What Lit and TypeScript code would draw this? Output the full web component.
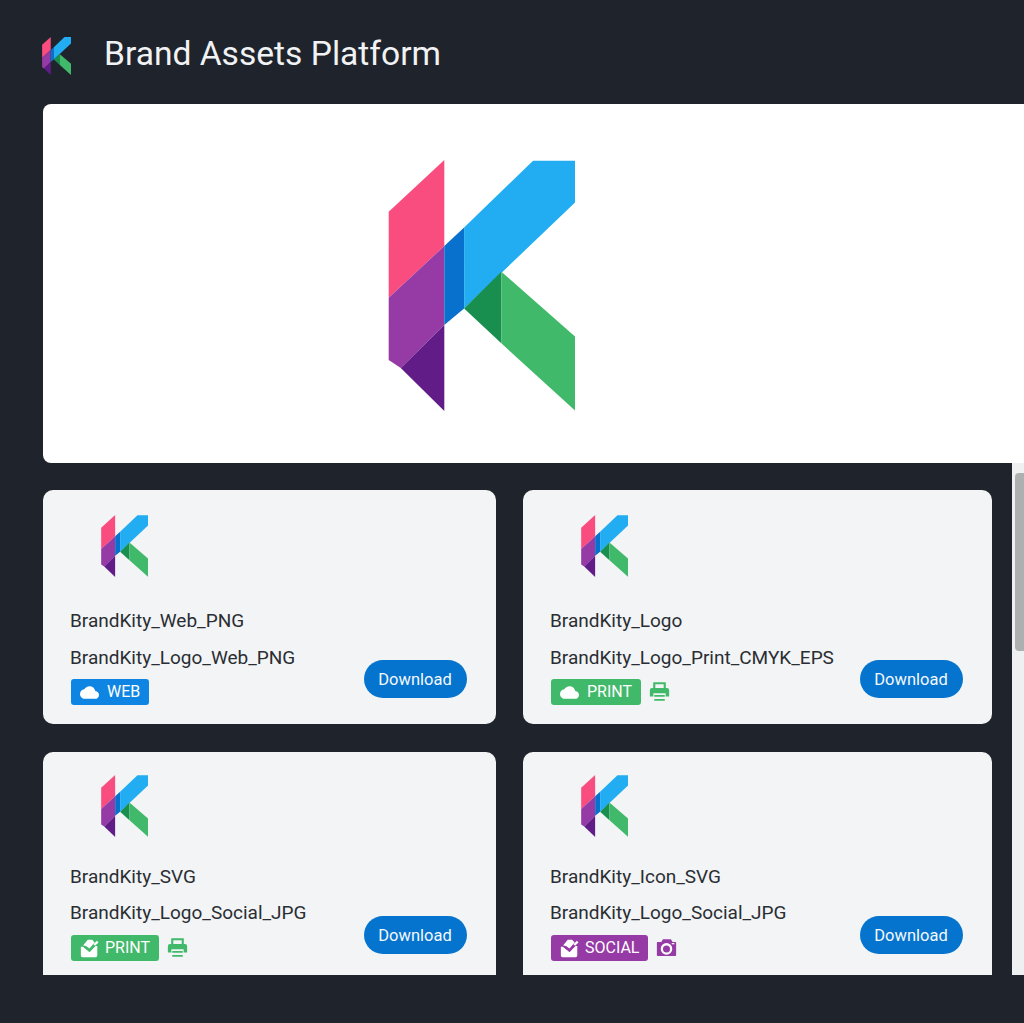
import { LitElement, html, css, svg } from "lit";
import { customElement } from "lit/decorators.js";

const logo = (cls: string) => html`<svg class=${cls} viewBox="0 0 186 251" preserveAspectRatio="none" aria-hidden="true">
  ${svg`
  <path fill="#f94d80" d="M0.7 51.7 56 0V86L0.7 137.7z"/>
  <path fill="#963aa5" d="M0.7 137.7 56 86V165L12.7 208 0.7 200z"/>
  <path fill="#611c87" d="M12.7 208 56 165V251z"/>
  <path fill="#0870cd" d="M56 86 75.7 67.5V148.5L56 165z"/>
  <path fill="#22adf2" d="M75.7 67.5 144.3 0.7H186.3V42.3L75.7 148.5z"/>
  <path fill="#188f4f" d="M75.7 148.5 112.7 111.7V183.3z"/>
  <path fill="#41b96a" d="M112.7 111.7 186.3 176.7V250.7L112.7 183.3z"/>
  `}
</svg>`;

const cloud = html`<svg class="glyph" viewBox="0 0 24 24" aria-hidden="true"><path fill="#fff" d="M19.35 10.04C18.67 6.59 15.64 4 12 4 9.11 4 6.6 5.64 5.35 8.04 2.34 8.36 0 10.91 0 14c0 3.31 2.69 6 6 6h13c2.76 0 5-2.24 5-5 0-2.64-2.05-4.78-4.65-4.96z"/></svg>`;

const check = (color: string) => html`<svg class="glyph" viewBox="1 1 22 22" aria-hidden="true">
  ${svg`
  <path fill="#fff" d="M5 8 10 2h5l3 3-6 7-4-3-3 0z"/>
  <path fill="#fff" d="M2 10h3l7 6 7-7h2v11a2 2 0 0 1-2 2H4a2 2 0 0 1-2-2z"/>
  <path fill="none" stroke=${color} stroke-width="2.200" d="M5 9l7 5.500 8-9"/>
  <path fill="none" stroke="#fff" stroke-width="2.600" d="M17.500 8l4-4"/>
  `}
</svg>`;

const printer = html`<svg class="side" viewBox="0 0 24 24" aria-hidden="true">
  ${svg`
  <path fill="none" stroke="#41b96a" stroke-width="2.400" d="M6 9V2h12V9"/>
  <path fill="#41b96a" d="M3.500 7.500h17A2.500 2.500 0 0 1 23 10V17h-4v-3.500H5V17H1V10A2.500 2.500 0 0 1 3.500 7.500z"/>
  <path fill="none" stroke="#41b96a" stroke-width="2" d="M6 16.500h12M6 21h12"/>
  `}
</svg>`;

const camera = html`<svg class="side" viewBox="0 0 24 24" aria-hidden="true">
  ${svg`
  <path fill="#963aa5" d="M2 5h4l2-3h9l2 3h3a1 1 0 0 1 1 1v14a1 1 0 0 1-1 1H2a1 1 0 0 1-1-1V6a1 1 0 0 1 1-1z"/>
  <circle cx="12" cy="13" r="5.300" fill="none" stroke="#fff" stroke-width="2.600"/>
  <path stroke="#fff" stroke-width="1.500" d="M18 7h3"/>
  `}
</svg>`;

interface Asset {
  name: string;
  file: string;
  tag: string;
  tone: string;
  icon: unknown;
  side?: unknown;
}

const assets: Asset[] = [
  { name: "BrandKity_Web_PNG", file: "BrandKity_Logo_Web_PNG", tag: "WEB", tone: "web", icon: cloud },
  { name: "BrandKity_Logo", file: "BrandKity_Logo_Print_CMYK_EPS", tag: "PRINT", tone: "print", icon: cloud, side: printer },
  { name: "BrandKity_SVG", file: "BrandKity_Logo_Social_JPG", tag: "PRINT", tone: "print", icon: check("#41b96a"), side: printer },
  { name: "BrandKity_Icon_SVG", file: "BrandKity_Logo_Social_JPG", tag: "SOCIAL", tone: "social", icon: check("#963aa5"), side: camera },
];

@customElement("app-root")
export class AppRoot extends LitElement {
  static styles = css`
    :host {
      display: flex;
      flex-direction: column;
      height: 1023px;
      overflow: hidden;
      background: #1f242c;
      font-family: Roboto, "Liberation Sans", sans-serif;
    }
    header {
      flex: none;
      height: 104px;
      display: flex;
      align-items: center;
      padding-left: 42px;
      gap: 33px;
    }
    .logo-head { width: 29px; height: 38px; flex: none; margin-top: 8px; }
    h1 {
      margin: 4px 0 0;
      font-size: 33.600px;
      font-weight: 400;
      color: #f1f2f3;
      line-height: 1.2;
    }
    .hero {
      flex: none;
      height: 359px;
      box-sizing: border-box;
      margin-left: 43px;
      padding: 56px 0 0 345px;
      background: #fff;
      border-radius: 8px 0 0 8px;
    }
    .logo-hero { width: 187px; height: 251px; display: block; }
    .content {
      flex: none;
      height: 512px;
      display: flex;
      overflow: hidden;
    }
    .grid {
      flex: none;
      display: grid;
      grid-template-columns: 452.500px 468.500px;
      grid-auto-rows: 234px;
      gap: 28px 27.500px;
      padding: 27px 0 0 43px;
    }
    .card {
      background: #f2f4f6;
      border-radius: 10px;
      box-sizing: border-box;
      padding: 25px 29px 0 27px;
      color: #2a2e33;
      font-size: 19px;
      line-height: 24px;
      display: flex;
      flex-direction: column;
    }
    .card.lower { padding-top: 23px; }
    .logo-card { width: 47px; height: 62px; margin-left: 31px; display: block; flex: none; }
    .name { margin-top: 32px; }
    .lower .name { margin-top: 28px; }
    .foot {
      display: flex;
      justify-content: space-between;
      align-items: flex-end;
      margin-top: 13px;
    }
    .lower .foot { margin-top: 12px; }
    .file { margin-bottom: 9px; }
    .lower .file { margin-bottom: 10px; }
    .tags { display: flex; align-items: center; gap: 8px; margin-left: 1px; }
    .tag {
      display: flex;
      align-items: center;
      height: 26px;
      padding: 0 9px;
      gap: 8px;
      border-radius: 3px;
      color: #fff;
      font-size: 16px;
      line-height: 26px;
    }
    .lower .tag { gap: 6px; }
    .tag.web { background: #0f85e3; }
    .tag.print { background: #41b96a; }
    .tag.social { background: #963aa5; }
    .glyph { width: 19px; height: 19px; flex: none; }
    .side { width: 21px; height: 22px; flex: none; }
    button {
      width: 103px;
      height: 38px;
      border: 0;
      padding: 0;
      border-radius: 19px;
      background: #0574ce;
      color: #f4f8fc;
      font: 400 16.500px Roboto, "Liberation Sans", sans-serif;
      margin-bottom: 7px;
    }
    .track {
      flex: none;
      width: 12px;
      margin-left: 20.500px;
      box-sizing: border-box;
      padding: 10px 0 0 3px;
      background: #eff0f1;
    }
    .thumb {
      height: 178px;
      background: #adb0b1;
      border-radius: 4px 0 0 4px;
    }
  `;

  render() {
    return html`
      <header>
        ${logo("logo-head")}
        <h1>Brand Assets Platform</h1>
      </header>
      <section class="hero">${logo("logo-hero")}</section>
      <section class="content">
        <div class="grid">
          ${assets.map(
            (a, i) => html`
              <article class="card ${i > 1 ? "lower" : ""}">
                ${logo("logo-card")}
                <div class="name">${a.name}</div>
                <div class="foot">
                  <div>
                    <div class="file">${a.file}</div>
                    <div class="tags">
                      <span class="tag ${a.tone}">${a.icon}${a.tag}</span>
                      ${a.side ?? ""}
                    </div>
                  </div>
                  <button>Download</button>
                </div>
              </article>
            `
          )}
        </div>
        <div class="track"><div class="thumb"></div></div>
      </section>
    `;
  }
}
